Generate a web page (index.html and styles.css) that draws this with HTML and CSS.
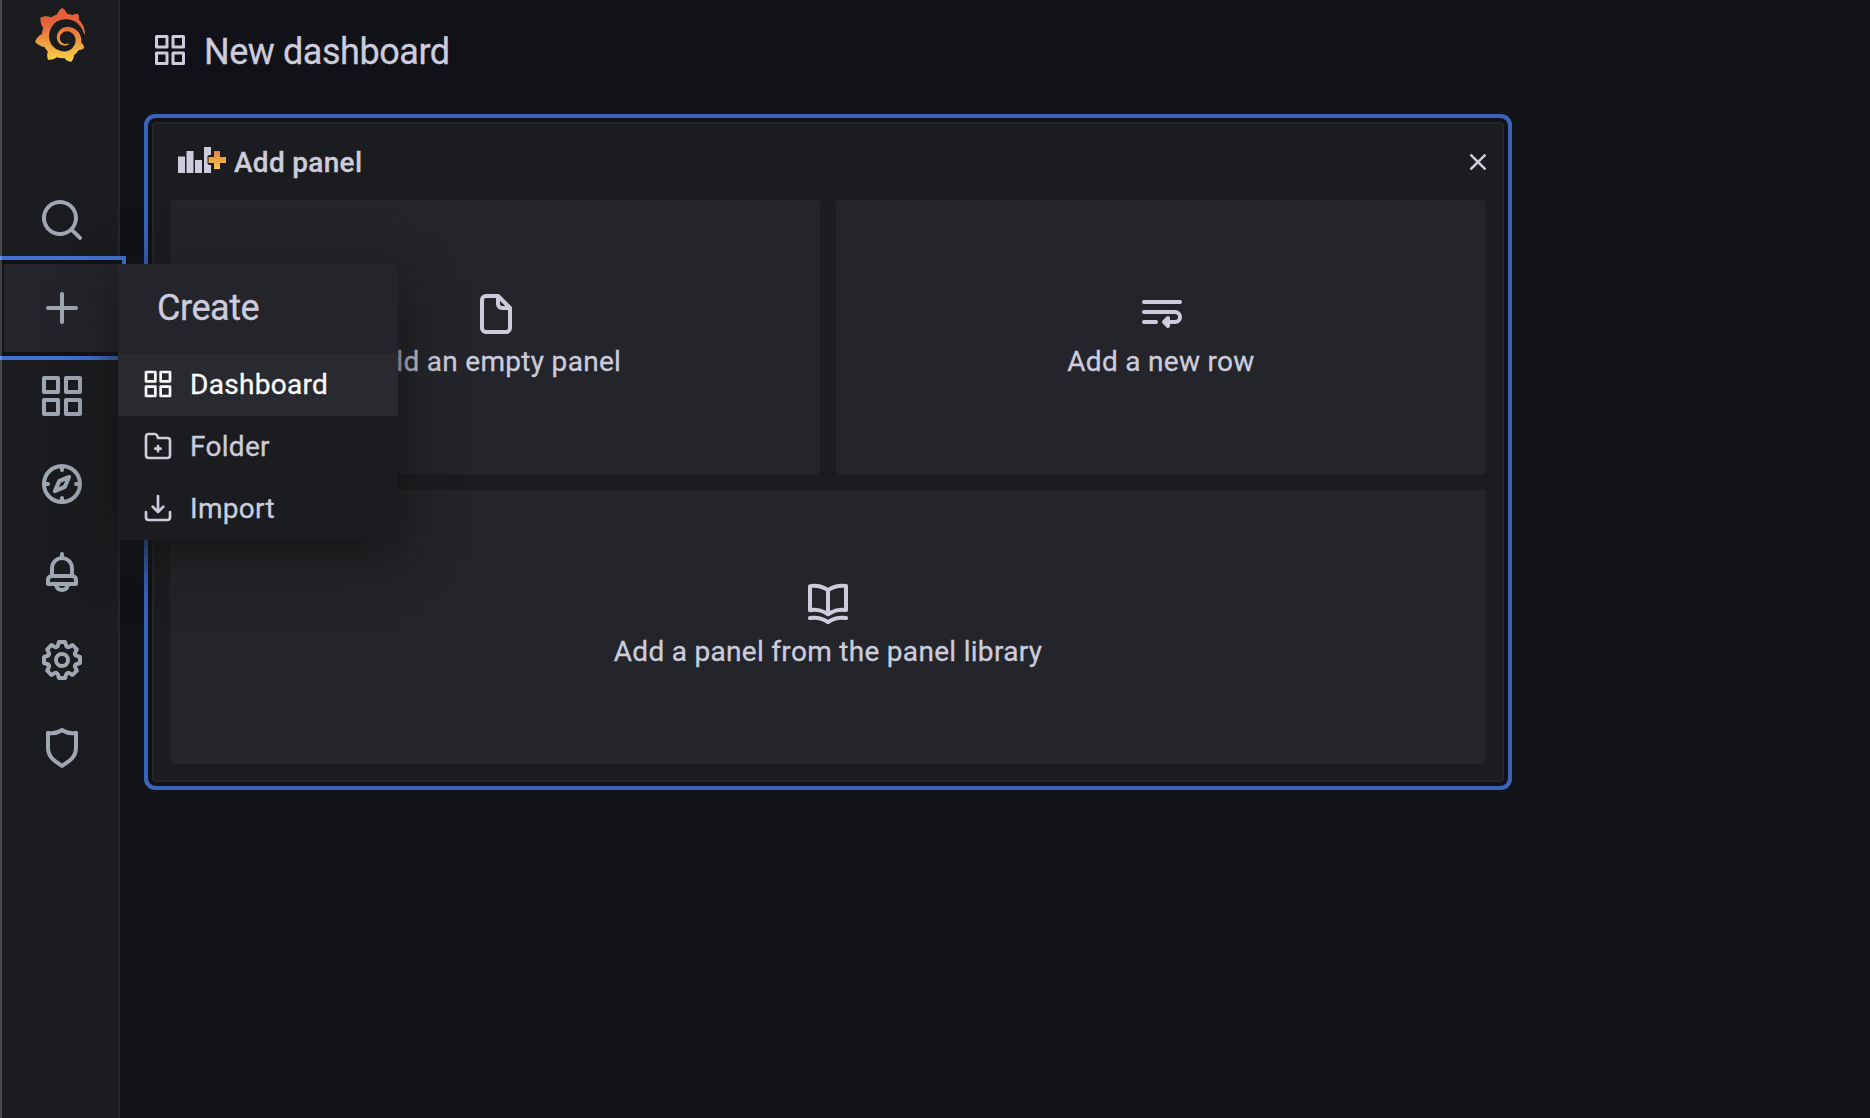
FILE: index.html
```html
<!DOCTYPE html>
<html lang="en">
<head>
<meta charset="utf-8">
<title>New dashboard - Grafana</title>
<link rel="stylesheet" href="styles.css">
</head>
<body>
<svg class="defs" width="0" height="0" aria-hidden="true">
  <symbol id="apps" viewBox="0 0 24 24"><path d="M10,13H3a1,1,0,0,0-1,1v7a1,1,0,0,0,1,1h7a1,1,0,0,0,1-1V14A1,1,0,0,0,10,13ZM9,20H4V15H9ZM21,2H14a1,1,0,0,0-1,1v7a1,1,0,0,0,1,1h7a1,1,0,0,0,1-1V3A1,1,0,0,0,21,2ZM20,9H15V4h5Zm1,4H14a1,1,0,0,0-1,1v7a1,1,0,0,0,1,1h7a1,1,0,0,0,1-1V14A1,1,0,0,0,21,13Zm-1,7H15V15h5ZM10,2H3A1,1,0,0,0,2,3v7a1,1,0,0,0,1,1h7a1,1,0,0,0,1-1V3A1,1,0,0,0,10,2ZM9,9H4V4H9Z"/></symbol>
</svg>
<div class="app">
  <nav class="sidebar">
    <a class="logo">
      <svg viewBox="0 0 24 24">
        <defs><linearGradient id="flame" x1="0" y1="1" x2="0" y2="0"><stop offset="0" stop-color="#f9d648"/><stop offset=".12" stop-color="#f5c343"/><stop offset=".72" stop-color="#e4623a"/><stop offset="1" stop-color="#e2603a"/></linearGradient></defs>
        <path fill="url(#flame)" d="M23.02 10.59a8.578 8.578 0 0 0-.862-3.034 8.911 8.911 0 0 0-1.789-2.445c.337-1.342-.413-2.505-.413-2.505-1.292-.08-2.113.4-2.416.62-.052-.02-.102-.044-.154-.064-.22-.089-.446-.172-.677-.247-.231-.073-.47-.14-.711-.197a9.867 9.867 0 0 0-.875-.161C14.557.753 12.94 0 12.94 0c-1.804 1.145-2.147 2.744-2.147 2.744l-.018.093c-.098.029-.2.057-.298.088-.138.042-.275.094-.413.143-.138.055-.275.107-.41.166a8.869 8.869 0 0 0-1.557.87l-.063-.029c-2.497-.955-4.716.195-4.716.195-.203 2.658.996 4.33 1.235 4.636a11.608 11.608 0 0 0-.607 2.635C1.636 12.677.953 15.014.953 15.014c1.926 2.214 4.171 2.351 4.171 2.351.003-.002.006-.002.006-.005.285.509.615.994.986 1.446.156.19.32.371.488.548-.704 2.009.099 3.68.099 3.68 2.144.08 3.553-.937 3.849-1.173a9.784 9.784 0 0 0 3.164.501h.08l.055-.003.107-.002.103-.005.003.002c1.01 1.44 2.788 1.646 2.788 1.646 1.264-1.332 1.337-2.653 1.337-2.94v-.058c0-.02-.003-.039-.003-.06.265-.187.52-.387.758-.6a7.875 7.875 0 0 0 1.415-1.7c1.43.083 2.437-.885 2.437-.885-.236-1.49-1.085-2.216-1.264-2.354l-.018-.013-.016-.013a.217.217 0 0 1-.031-.02c.008-.092.016-.18.02-.27.011-.162.016-.323.016-.48v-.253l-.005-.098-.008-.135a1.891 1.891 0 0 0-.01-.13c-.003-.042-.008-.083-.013-.125l-.016-.124-.018-.122a6.215 6.215 0 0 0-2.032-3.73 6.015 6.015 0 0 0-3.222-1.46 6.292 6.292 0 0 0-.85-.048l-.107.002h-.063l-.044.003-.104.008a4.777 4.777 0 0 0-3.335 1.695c-.332.4-.592.84-.768 1.297a4.594 4.594 0 0 0-.312 1.817l.003.091c.005.055.007.11.013.164a3.615 3.615 0 0 0 .698 1.82 3.53 3.53 0 0 0 1.827 1.282c.33.098.66.14.971.137.039 0 .078 0 .114-.002l.063-.003c.02 0 .041-.003.062-.003.034-.002.065-.007.099-.01.007 0 .018-.003.028-.003l.031-.005.06-.008a1.18 1.18 0 0 0 .112-.02c.036-.008.072-.013.109-.024a2.634 2.634 0 0 0 .914-.415c.028-.02.056-.041.085-.065a.248.248 0 0 0 .039-.35.244.244 0 0 0-.309-.06l-.078.042c-.09.044-.184.083-.283.116a2.476 2.476 0 0 1-.475.096c-.028.003-.054.006-.083.006l-.083.002c-.026 0-.054 0-.08-.002l-.102-.006h-.012l-.024.006c-.016-.003-.031-.003-.044-.006-.031-.002-.06-.007-.091-.01a2.59 2.59 0 0 1-.724-.213 2.557 2.557 0 0 1-.667-.438 2.52 2.52 0 0 1-.805-1.475 2.306 2.306 0 0 1-.029-.444l.006-.122v-.023l.002-.031c.003-.021.003-.04.005-.06a3.163 3.163 0 0 1 1.352-2.29 3.12 3.12 0 0 1 .937-.43 2.946 2.946 0 0 1 .776-.101h.06l.07.002.045.003h.026l.07.005a4.041 4.041 0 0 1 1.635.49 3.94 3.94 0 0 1 1.602 1.662 3.77 3.77 0 0 1 .397 1.414l.005.076.003.075c.002.026.002.05.002.075 0 .024.003.052 0 .07v.065l-.002.073-.008.174a6.195 6.195 0 0 1-.08.639 5.1 5.1 0 0 1-.267.927 5.31 5.31 0 0 1-.624 1.13 5.052 5.052 0 0 1-3.237 2.014 4.82 4.82 0 0 1-.649.066l-.039.003h-.287a6.607 6.607 0 0 1-1.716-.265 6.776 6.776 0 0 1-3.4-2.274 6.75 6.75 0 0 1-.746-1.15 6.616 6.616 0 0 1-.714-2.596l-.005-.083-.002-.02v-.056l-.003-.073v-.096l-.003-.104v-.07l.003-.163c.008-.22.026-.45.054-.678a8.707 8.707 0 0 1 .28-1.355c.128-.444.286-.872.473-1.277a7.04 7.04 0 0 1 1.456-2.1 5.925 5.925 0 0 1 .953-.763c.169-.111.343-.213.524-.306.089-.05.182-.091.273-.135.047-.02.093-.042.138-.062a7.177 7.177 0 0 1 .714-.267l.145-.045c.049-.015.098-.026.148-.041.098-.029.197-.052.296-.076.049-.013.1-.02.15-.033l.15-.032.151-.028.076-.013.075-.01.153-.024c.057-.01.114-.013.171-.023l.169-.021c.036-.003.073-.008.106-.01l.073-.008.036-.003.042-.002c.057-.003.114-.008.171-.01l.086-.006h.023l.037-.003.145-.007a7.999 7.999 0 0 1 1.708.125 7.917 7.917 0 0 1 2.048.68 8.253 8.253 0 0 1 1.672 1.09l.09.077.089.078c.06.052.114.107.171.159.057.052.112.106.166.16.052.055.107.107.159.164a8.671 8.671 0 0 1 1.41 1.978c.012.026.028.052.04.078l.04.078.075.156c.023.051.05.1.07.153l.065.15a8.848 8.848 0 0 1 .45 1.34.19.19 0 0 0 .201.142.186.186 0 0 0 .172-.184c.01-.246.002-.532-.024-.856Z"/>
      </svg>
    </a>
    <a class="nav-item"><svg class="icon-lg" viewBox="0 0 24 24"><path d="M21.71,20.29,18,16.61A9,9,0,1,0,16.61,18l3.68,3.68a1,1,0,0,0,1.42,0A1,1,0,0,0,21.71,20.29ZM11,18a7,7,0,1,1,7-7A7,7,0,0,1,11,18Z"/></svg></a>
    <div class="nav-item active">
      <svg class="icon-lg" viewBox="0 0 24 24"><path d="M19,11H13V5a1,1,0,0,0-2,0v6H5a1,1,0,0,0,0,2h6v6a1,1,0,0,0,2,0V13h6a1,1,0,0,0,0-2Z"/></svg>
      <div class="flyout">
        <div class="flyout-title">Create</div>
        <a class="flyout-item selected"><svg class="icon-sm"><use href="#apps"/></svg>Dashboard</a>
        <a class="flyout-item"><svg class="icon-sm" viewBox="0 0 24 24"><path d="M14,13H13V12a1,1,0,0,0-2,0v1H10a1,1,0,0,0,0,2h1v1a1,1,0,0,0,2,0V15h1a1,1,0,0,0,0-2Zm5-8H12.72l-.32-1A3,3,0,0,0,9.56,2H5A3,3,0,0,0,2,5V19a3,3,0,0,0,3,3H19a3,3,0,0,0,3-3V8A3,3,0,0,0,19,5Zm1,14a1,1,0,0,1-1,1H5a1,1,0,0,1-1-1V5A1,1,0,0,1,5,4H9.56a1,1,0,0,1,.95.68l.54,1.64A1,1,0,0,0,12,7h7a1,1,0,0,1,1,1Z"/></svg>Folder</a>
        <a class="flyout-item"><svg class="icon-sm" viewBox="0 0 24 24"><path d="M21,14a1,1,0,0,0-1,1v4a1,1,0,0,1-1,1H5a1,1,0,0,1-1-1V15a1,1,0,0,0-2,0v4a3,3,0,0,0,3,3H19a3,3,0,0,0,3-3V15A1,1,0,0,0,21,14Zm-9.71,1.71a1,1,0,0,0,.33.21.94.94,0,0,0,.76,0,1,1,0,0,0,.33-.21l4-4a1,1,0,0,0-1.42-1.42L13,12.59V3a1,1,0,0,0-2,0v9.59l-2.29-2.3a1,1,0,1,0-1.42,1.42Z"/></svg>Import</a>
      </div>
    </div>
    <a class="nav-item"><svg class="icon-lg"><use href="#apps"/></svg></a>
    <a class="nav-item"><svg class="icon-lg" viewBox="0 0 24 24"><path d="M12,2A10,10,0,1,0,22,12,10,10,0,0,0,12,2Zm1,17.93V19a1,1,0,0,0-2,0v.93A8,8,0,0,1,4.07,13H5a1,1,0,0,0,0-2H4.07A8,8,0,0,1,11,4.07V5a1,1,0,0,0,2,0V4.07A8,8,0,0,1,19.93,11H19a1,1,0,0,0,0,2h.93A8,8,0,0,1,13,19.93ZM15.14,7.55l-5,2.12a1,1,0,0,0-.52.52l-2.12,5a1,1,0,0,0,.21,1.1,1,1,0,0,0,.7.29.93.93,0,0,0,.4-.09l5-2.12a1,1,0,0,0,.52-.52l2.12-5a1,1,0,0,0-1.31-1.3Zm-2.49,5.1-2.28,1,1-2.28,2.28-1Z"/></svg></a>
    <a class="nav-item"><svg class="icon-lg" viewBox="0 0 24 24"><path d="M18,13.18V10a6,6,0,0,0-5-5.91V3a1,1,0,0,0-2,0V4.09A6,6,0,0,0,6,10v3.18A3,3,0,0,0,4,16v2a1,1,0,0,0,1,1H8.14a4,4,0,0,0,7.72,0H19a1,1,0,0,0,1-1V16A3,3,0,0,0,18,13.18ZM8,10a4,4,0,0,1,8,0v3H8Zm4,10a2,2,0,0,1-1.72-1h3.44A2,2,0,0,1,12,20Zm6-3H6V16a1,1,0,0,1,1-1H17a1,1,0,0,1,1,1Z"/></svg></a>
    <a class="nav-item"><svg class="icon-lg" viewBox="0 0 24 24"><path d="M21.32,9.55l-1.89-.63.89-1.78A1,1,0,0,0,20.13,6L18,3.87a1,1,0,0,0-1.15-.19l-1.78.89-.63-1.89A1,1,0,0,0,13.5,2h-3a1,1,0,0,0-.95.68L8.92,4.57,7.14,3.68A1,1,0,0,0,6,3.87L3.87,6a1,1,0,0,0-.19,1.15l.89,1.78-1.89.63A1,1,0,0,0,2,10.5v3a1,1,0,0,0,.68.95l1.89.63-.89,1.78A1,1,0,0,0,3.87,18L6,20.13a1,1,0,0,0,1.15.19l1.78-.89.63,1.89a1,1,0,0,0,.95.68h3a1,1,0,0,0,.95-.68l.63-1.89,1.78.89A1,1,0,0,0,18,20.13L20.13,18a1,1,0,0,0,.19-1.15l-.89-1.78,1.89-.63A1,1,0,0,0,22,13.5v-3A1,1,0,0,0,21.32,9.55ZM20,12.78l-1.2.4A2,2,0,0,0,17.64,16l.57,1.14-1.1,1.1L16,17.64a2,2,0,0,0-2.79,1.16l-.4,1.2H11.22l-.4-1.2A2,2,0,0,0,8,17.64l-1.14.57-1.1-1.1L6.36,16A2,2,0,0,0,5.2,13.18L4,12.78V11.22l1.2-.4A2,2,0,0,0,6.36,8L5.79,6.89l1.1-1.1L8,6.36A2,2,0,0,0,10.82,5.2l.4-1.2h1.56l.4,1.2A2,2,0,0,0,16,6.36l1.14-.57,1.1,1.1L17.64,8a2,2,0,0,0,1.16,2.79l1.2.4ZM12,8a4,4,0,1,0,4,4A4,4,0,0,0,12,8Zm0,6a2,2,0,1,1,2-2A2,2,0,0,1,12,14Z"/></svg></a>
    <a class="nav-item"><svg class="icon-lg" viewBox="0 0 24 24"><path d="M19.63,3.65a1,1,0,0,0-.84-.2,8,8,0,0,1-6.22-1.27,1,1,0,0,0-1.14,0A8,8,0,0,1,5.21,3.45a1,1,0,0,0-.84.2A1,1,0,0,0,4,4.43v7.45a9,9,0,0,0,3.77,7.33l3.65,2.6a1,1,0,0,0,1.16,0l3.65-2.6A9,9,0,0,0,20,11.88V4.43A1,1,0,0,0,19.63,3.65ZM18,11.88a7,7,0,0,1-2.93,5.7L12,19.77,8.93,17.58A7,7,0,0,1,6,11.88V5.58a10,10,0,0,0,6-1.39,10,10,0,0,0,6,1.39Z"/></svg></a>
  </nav>
  <main class="main">
    <header class="toolbar">
      <svg class="icon-md"><use href="#apps"/></svg>
      <h1>New dashboard</h1>
    </header>
    <section class="panel">
      <header class="panel-header">
        <svg class="add-icon" viewBox="0 0 48 26">
          <defs><linearGradient id="plus" x1="0" y1="1" x2="0" y2="0"><stop offset="0" stop-color="#f2c83c"/><stop offset="1" stop-color="#e8824a"/></linearGradient></defs>
          <path d="M0 9.500h7V26H0ZM8.500 4h7v22h-7ZM17 13h7v13h-7ZM26 0h7v8h-1.500a2 2 0 0 0-2 2v6a2 2 0 0 0 2 2H33v8h-7Z"/>
          <path fill="url(#plus)" d="M36 4h6v6h6v6h-6v6h-6v-6h-5.500v-6H36Z"/>
        </svg>
        <h2>Add panel</h2>
        <svg class="close" viewBox="0 0 16 16"><path d="M1.300 1.300 14.700 14.700M14.700 1.300 1.300 14.700"/></svg>
      </header>
      <div class="cards">
        <div class="card"><svg class="icon-lg" viewBox="0 0 24 24"><path d="M20,8.940a1.310,1.310,0,0,0-.060-.270l0-.090a1.070,1.070,0,0,0-.190-.280h0l-6-6h0a1.070,1.070,0,0,0-.280-.190l-.100,0L13.060,2H7A3,3,0,0,0,4,5V19a3,3,0,0,0,3,3H17a3,3,0,0,0,3-3V9S20,9,20,8.940ZM14,5.410,16.590,8H15a1,1,0,0,1-1-1ZM18,19a1,1,0,0,1-1,1H7a1,1,0,0,1-1-1V5A1,1,0,0,1,7,4h5V7a3,3,0,0,0,3,3h3Z"/></svg>Add an empty panel</div>
        <div class="card"><svg class="icon-lg" viewBox="0 0 24 24"><path d="M3,7H21a1,1,0,0,0,0-2H3A1,1,0,0,0,3,7ZM9,15H3a1,1,0,0,0,0,2H9a1,1,0,0,0,0-2Zm9.500-5H3a1,1,0,0,0,0,2H18.500a1.500,1.500,0,0,1,0,3H16v-1a1,1,0,0,0-1.700-.700l-2,2a1,1,0,0,0,0,1.400l2,2A1,1,0,0,0,16,18V17h2.500a3.500,3.500,0,0,0,0-7Z"/></svg>Add a new row</div>
        <div class="card wide"><svg class="icon-lg" viewBox="0 0 24 24"><path d="M21.17,2.06A13.1,13.1,0,0,0,19,1.87a12.94,12.94,0,0,0-7,2.05,12.94,12.94,0,0,0-7-2,13.1,13.1,0,0,0-2.17.19,1,1,0,0,0-.83,1v12a1,1,0,0,0,1.17,1,10.9,10.9,0,0,1,8.25,1.91l.12.07.11,0a.91.91,0,0,0,.7,0l.11,0,.12-.07A10.9,10.9,0,0,1,20.83,16,1,1,0,0,0,22,15V3A1,1,0,0,0,21.17,2.06ZM11,15.35a12.87,12.87,0,0,0-6-1.48c-.33,0-.66,0-1,0v-10a8.69,8.69,0,0,1,1,0,10.86,10.86,0,0,1,6,1.8Zm9-1.44c-.34,0-.67,0-1,0a12.87,12.87,0,0,0-6,1.48V5.67a10.86,10.86,0,0,1,6-1.8,8.69,8.69,0,0,1,1,0Zm1.170,4.150A13.1,13.1,0,0,0,19,17.87a12.94,12.94,0,0,0-7,2.05,12.94,12.94,0,0,0-7-2.05,13.1,13.1,0,0,0-2.17.19A1,1,0,0,0,2,19.21a1,1,0,0,0,1.17.79,10.9,10.9,0,0,1,8.25,1.91,1,1,0,0,0,1.16,0A10.9,10.9,0,0,1,20.83,20,1,1,0,0,0,22,19.21,1,1,0,0,0,21.17,18.06Z"/></svg>Add a panel from the panel library</div>
      </div>
    </section>
  </main>
</div>
</body>
</html>
```
FILE: styles.css
```css
* { box-sizing: border-box; }

body {
  margin: 0;
  background: #111217;
  color: #ccccdc;
  font-family: Roboto, "Liberation Sans", sans-serif;
  font-size: 28px;
  letter-spacing: 0.3px;
  -webkit-text-stroke: 0.3px currentColor;
  overflow: hidden;
}

.defs { position: absolute; }
svg { display: block; flex: none; fill: currentColor; }
.icon-sm { width: 32px; height: 32px; }
.icon-md { width: 36px; height: 36px; }
.icon-lg { width: 48px; height: 48px; }

h1, h2 { margin: 0; }

.app {
  display: grid;
  grid-template-columns: 120px 1fr;
  height: 1118px;
}

/* Sidebar */
.sidebar {
  position: relative;
  z-index: 2;
  display: flex;
  flex-direction: column;
  padding: 0 0 0 4px;
  background: #1b1c1f;
  border-right: 2px solid #25262a;
  color: #9fa7b3;
}

/* Light window edge over everything in the sidebar */
.sidebar::after {
  content: "";
  position: absolute;
  inset: 0 auto 0 0;
  width: 2px;
  background: rgba(255, 255, 255, 0.2);
}

.logo { height: 176px; padding: 8px 0 0 29px; }
.logo svg { width: 54px; height: 54px; }

.nav-item {
  display: flex;
  align-items: center;
  height: 88px;
  padding-left: 34px;
}

.nav-item.active {
  position: relative;
  background: #24252a;
  box-shadow: 0 0 0 4px #111217, 0 0 0 8px #4273d3;
}

.flyout {
  position: absolute;
  top: 0;
  left: 114px;
  width: 280px;
  background: #1b1c1f;
  color: #ccccdc;
  box-shadow: 0 16px 48px rgba(20, 20, 19, 0.9);
}

.flyout-title {
  height: 90px;
  padding-left: 39px;
  background: #24252a;
  font-size: 36px;
  letter-spacing: -0.45px;
  line-height: 88px;
}

.flyout-item {
  display: flex;
  align-items: center;
  gap: 16px;
  height: 62px;
  padding: 0 24px 2px;
}

.flyout-item.selected { background: #292a2f; color: #fff; }

/* Main area */
.main { padding: 32px 0 0 32px; }

.toolbar {
  display: flex;
  align-items: center;
  gap: 16px;
  height: 36px;
}

.toolbar h1 {
  padding-top: 3px;
  font-size: 36px;
  font-weight: 400;
  letter-spacing: -0.45px;
}

.panel {
  width: 1352px;
  height: 660px;
  margin-top: 54px;
  padding: 0 16px 16px;
  background: #1b1c1f;
  border: 2px solid #25262a;
  border-radius: 4px;
  box-shadow: 0 0 0 4px #111217, 0 0 0 8px #3a62b8;
}

.panel-header {
  display: flex;
  align-items: center;
  height: 76px;
  padding: 0 0 0 8px;
}

.panel-header h2 { margin-left: 8px; font-size: 28px; font-weight: 500; }
.add-icon { width: 48px; height: 26px; margin-bottom: 4px; }

.close {
  width: 16px;
  height: 16px;
  margin-left: auto;
  fill: none;
  stroke: currentColor;
  stroke-width: 2.6;
  stroke-linecap: round;
}

.cards {
  display: grid;
  grid-template-columns: 1fr 1fr;
  grid-template-rows: 274px 274px;
  gap: 16px;
}

.card {
  display: flex;
  flex-direction: column;
  align-items: center;
  padding-top: 90px;
  background: #24252a;
  border-radius: 4px;
  line-height: 48px;
}

.card svg { margin-left: 2px; }
.card.wide { grid-column: 1 / -1; }
.card.wide svg { margin-left: 0; }
```
